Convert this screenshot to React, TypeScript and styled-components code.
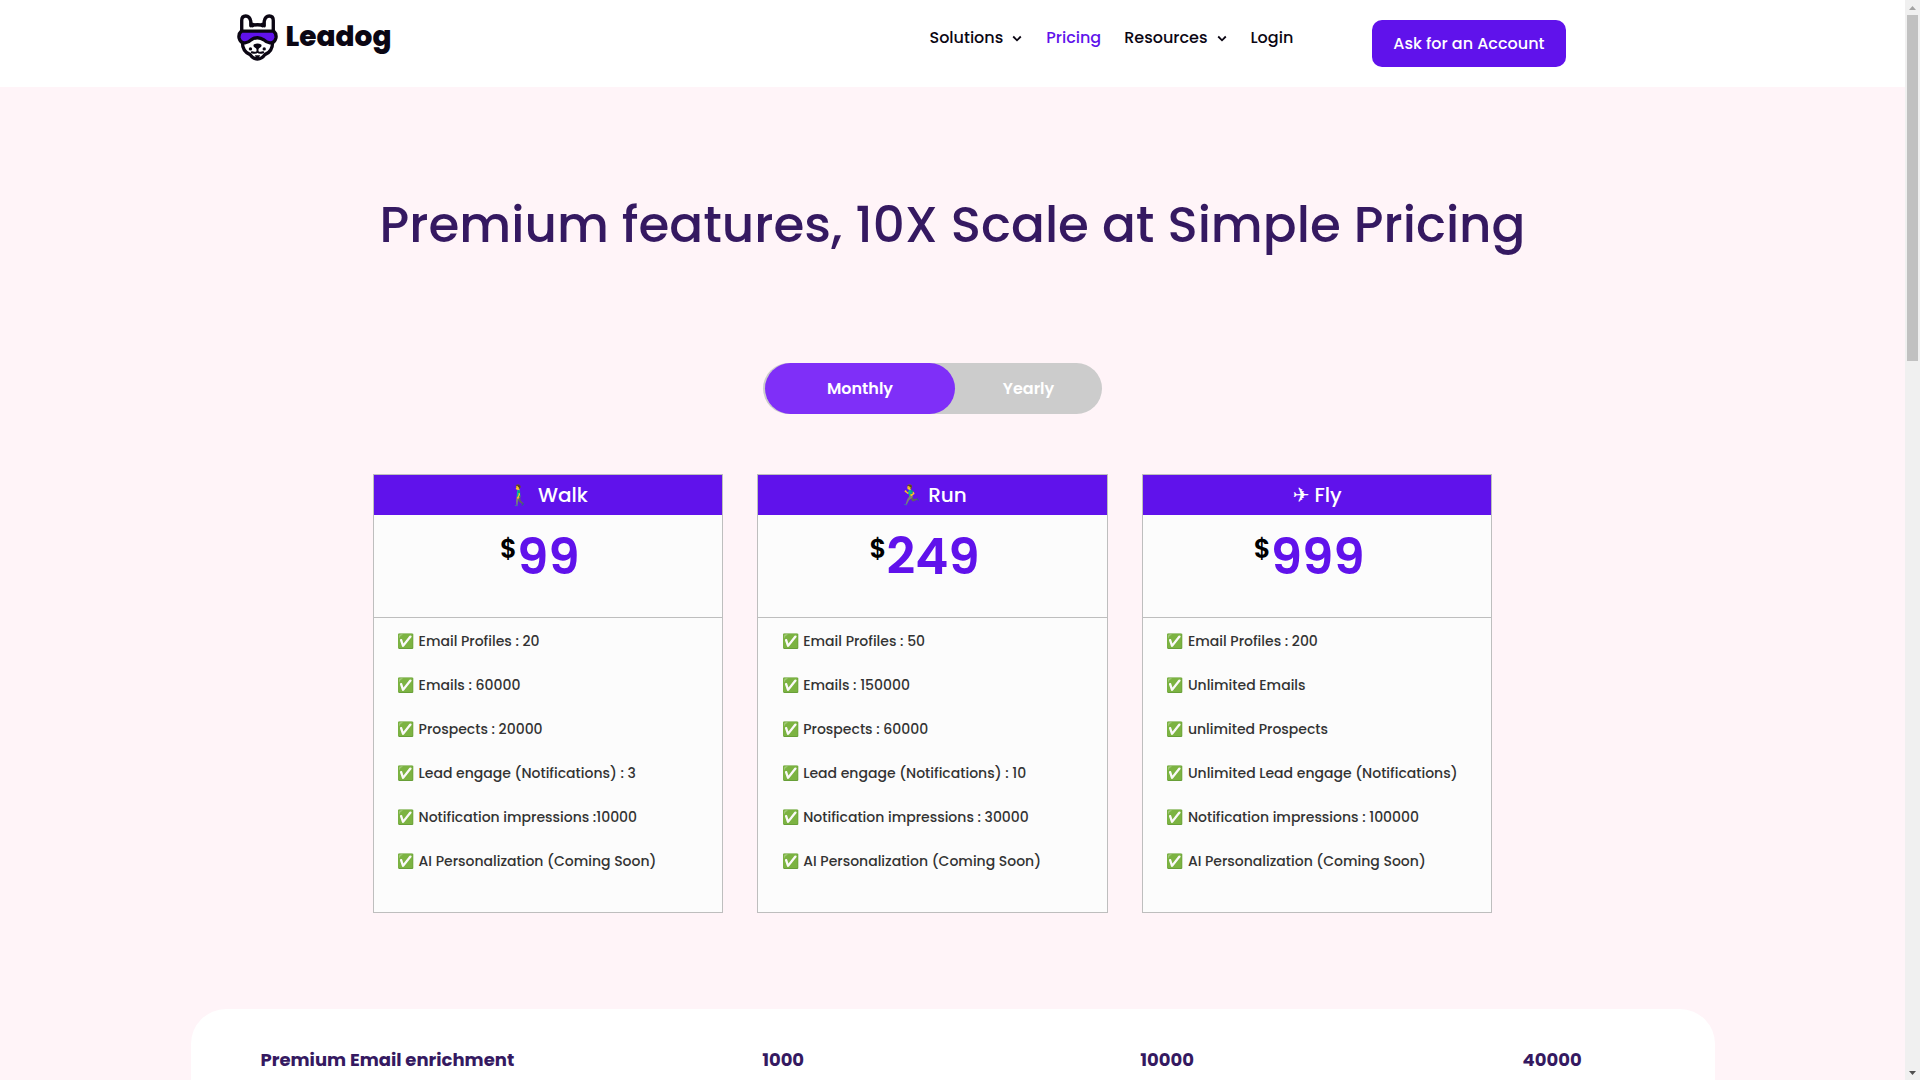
import React, { useState } from "react";
import styled, { createGlobalStyle } from "styled-components";

const color = {
  purple: "#6012eb",
  purpleLight: "#7f2ff8",
  plum: "#351961",
  ink: "#0b0613",
  blush: "#fff4f8",
  line: "#bebebe",
  text: "#333333",
};

const GlobalStyle = createGlobalStyle`
  *, *::before, *::after { box-sizing: border-box; }
  body {
    margin: 0;
    font-family: Poppins, Inter, "DejaVu Sans", "Noto Color Emoji", sans-serif;
    font-weight: 500;
    color: ${color.text};
  }
`;

const Window = styled.div`
  display: flex;
  height: 100vh;
  overflow: hidden;
  background: ${color.blush};
`;

const Page = styled.div`
  flex: 1;
  min-width: 0;
  overflow: hidden;
`;

const Header = styled.header`
  background: #fff;
`;

const HeaderInner = styled.div`
  width: 80%;
  height: 87px;
  margin: 0 auto;
  padding: 0 149px 0 46px;
  display: flex;
  align-items: flex-start;
`;

const Logo = styled.a`
  display: flex;
  gap: 8px;
  padding-top: 14px;
  color: ${color.ink};
  font-size: 28px;
  line-height: 45px;
  font-weight: 800;
  text-decoration: none;
`;

const Nav = styled.nav`
  display: flex;
  gap: 23px;
  margin: 26px 79px 0 auto;
`;

const NavLink = styled.a<{ $active?: boolean }>`
  display: flex;
  align-items: center;
  gap: 8px;
  font-size: 16px;
  line-height: 24px;
  color: ${(p) => (p.$active ? color.purple : color.ink)};
  text-decoration: none;
`;

const AccountButton = styled.button`
  margin-top: 20px;
  height: 47px;
  padding: 0 21px;
  border: 0;
  border-radius: 10px;
  background: ${color.purple};
  color: #fff;
  font: inherit;
  font-size: 16px;
  white-space: nowrap;
`;

const Title = styled.h1`
  margin: 0;
  padding: 108px 0;
  color: ${color.plum};
  font-size: 50px;
  line-height: 60px;
  font-weight: 500;
  text-align: center;
`;

const Pricing = styled.section`
  max-width: 1160px;
  margin: 0 auto;
  padding-right: 40px;
`;

const Toggle = styled.div`
  display: flex;
  width: 339px;
  height: 51px;
  margin: 0 auto 60px;
  padding-left: 2px;
  border-radius: 26px;
  background: #ccc;
`;

const ToggleOption = styled.button<{ $on: boolean }>`
  flex: ${(p) => (p.$on ? "0 0 190px" : "1")};
  border: 0;
  border-radius: 26px;
  background: ${(p) => (p.$on ? color.purpleLight : "transparent")};
  color: #fff;
  font: inherit;
  font-size: 16px;
  font-weight: 600;
`;

const Cards = styled.div`
  display: grid;
  grid-template-columns: repeat(3, minmax(0, 1fr));
  gap: 34px;
`;

const Card = styled.article`
  border: 1px solid ${color.line};
  background: #fcfcfc;
`;

const CardTitle = styled.h2`
  margin: 0;
  height: 40px;
  background: ${color.purple};
  color: #fff;
  font-size: 20px;
  line-height: 40px;
  font-weight: 500;
  text-align: center;
`;

const Price = styled.div`
  display: flex;
  justify-content: center;
  height: 103px;
  padding: 12px 16px 0 0;
  border-bottom: 1px solid ${color.line};
  color: ${color.purple};
  font-size: 50px;
  line-height: 60px;
  font-weight: 600;
`;

const Currency = styled.span`
  color: #000;
  font-size: 26px;
  line-height: 44px;
`;

const Features = styled.ul`
  margin: 0;
  padding: 1px 24px 29px;
  list-style: none;
  font-size: 14px;
  line-height: 44px;
`;

const Feature = styled.li`
  height: 44px;
  white-space: nowrap;
`;

const Panel = styled.section`
  width: 80%;
  margin: 96px auto 0;
  padding: 36px 0 120px 70px;
  border-radius: 35px;
  background: #fff;
`;

const Table = styled.table`
  width: 100%;
  border-collapse: collapse;
  table-layout: fixed;
  color: ${color.plum};
  font-size: 18px;
  line-height: 30px;
  font-weight: 700;
  text-align: left;
`;

const Cell = styled.td<{ $width: string }>`
  width: ${(p) => p.$width};
  padding: 0;
`;

const Scrollbar = styled.div`
  display: flex;
  flex-direction: column;
  align-items: center;
  flex: 0 0 15px;
  background: #f0f0f0;
`;

const ScrollThumb = styled.div`
  width: 11px;
  height: 32%;
  margin-bottom: auto;
  background: #c1c1c1;
`;

const ScrollArrow = ({ down }: { down?: boolean }) => (
  <svg width="15" height="15" viewBox="0 0 15 15" aria-hidden="true">
    <path d={down ? "M4 6h7L7.5 10z" : "M4 10h7L7.5 6z"} fill={down ? "#505050" : "#a3a3a3"} />
  </svg>
);

const Chevron = () => (
  <svg width="12" height="12" viewBox="0 0 12 12" aria-hidden="true">
    <path d="M2.2 4.500 6 8.300l3.800-3.800" fill="none" stroke={color.ink} strokeWidth="1.800" />
  </svg>
);

const DogMark = () => (
  <svg width="41" height="47" viewBox="51 43 122 140" aria-hidden="true">
    <g fill="none" stroke={color.ink} strokeWidth="10" strokeLinecap="round" strokeLinejoin="round">
      <path d="M65 94V62q0-13 12-13 12 0 15 16v13q20-6 40 0V65q3-16 15-16 12 0 12 13v32" fill="#fff" />
      <path d="M97 73v5M127 73v5" />
      <path d="M67 124q-1 31 23 40 9 13 22 13t22-13q24-9 23-40" fill="#fff" />
      <path d="M64 94h96q9 8 7 20-4 16-18 15-10-1-18-9-19-13-38 0-8 8-18 9-14 1-18-15-2-12 7-20z" fill={color.purple} />
      <path d="M112 143v12M95 157q11 4 17-2 6 6 17 2" strokeWidth="6" />
    </g>
    <g fill={color.ink}>
      <path d="M101 134q11-6 22 0 3 5-3 9l-8 6-8-6q-6-4-3-9z" />
      <circle cx="91" cy="147" r="5" />
      <circle cx="132" cy="147" r="5" />
      <path d="M104 166h16l-4 8h-8z" />
    </g>
  </svg>
);

const plans = [
  {
    icon: "🚶‍♂️",
    name: "Walk",
    price: "99",
    features: [
      "Email Profiles : 20",
      "Emails : 60000",
      "Prospects : 20000",
      "Lead engage (Notifications) : 3",
      "Notification impressions :10000",
      "AI Personalization (Coming Soon)",
    ],
  },
  {
    icon: "🏃‍♂️",
    name: "Run",
    price: "249",
    features: [
      "Email Profiles : 50",
      "Emails : 150000",
      "Prospects : 60000",
      "Lead engage (Notifications) : 10",
      "Notification impressions : 30000",
      "AI Personalization (Coming Soon)",
    ],
  },
  {
    icon: "✈",
    name: "Fly",
    price: "999",
    features: [
      "Email Profiles : 200",
      "Unlimited Emails",
      "unlimited Prospects",
      "Unlimited Lead engage (Notifications)",
      "Notification impressions : 100000",
      "AI Personalization (Coming Soon)",
    ],
  },
];

const periods = ["Monthly", "Yearly"];

export default function App() {
  const [period, setPeriod] = useState("Monthly");
  return (
    <Window>
      <GlobalStyle />
      <Page>
        <Header>
          <HeaderInner>
            <Logo href="#">
              <DogMark />
              Leadog
            </Logo>
            <Nav>
              <NavLink href="#solutions">Solutions <Chevron /></NavLink>
              <NavLink href="#pricing" $active>Pricing</NavLink>
              <NavLink href="#resources">Resources <Chevron /></NavLink>
              <NavLink href="#login">Login</NavLink>
            </Nav>
            <AccountButton type="button">Ask for an Account</AccountButton>
          </HeaderInner>
        </Header>
        <main>
          <Title>Premium features, 10X Scale at Simple Pricing</Title>
          <Pricing>
            <Toggle>
              {periods.map((p) => (
                <ToggleOption
                  key={p}
                  type="button"
                  $on={p === period}
                  aria-pressed={p === period}
                  onClick={() => setPeriod(p)}
                >
                  {p}
                </ToggleOption>
              ))}
            </Toggle>
            <Cards>
              {plans.map((plan) => (
                <Card key={plan.name}>
                  <CardTitle>{plan.icon} {plan.name}</CardTitle>
                  <Price>
                    <Currency>$</Currency>
                    {plan.price}
                  </Price>
                  <Features>
                    {plan.features.map((f) => (
                      <Feature key={f}>✅ {f}</Feature>
                    ))}
                  </Features>
                </Card>
              ))}
            </Cards>
          </Pricing>
          <Panel>
            <Table>
              <tbody>
                <tr>
                  <Cell as="th" scope="row" $width="34.5%">Premium Email enrichment</Cell>
                  <Cell $width="26%">1000</Cell>
                  <Cell $width="26.3%">10000</Cell>
                  <Cell $width="13.2%">40000</Cell>
                </tr>
              </tbody>
            </Table>
          </Panel>
        </main>
      </Page>
      <Scrollbar aria-hidden="true">
        <ScrollArrow />
        <ScrollThumb />
        <ScrollArrow down />
      </Scrollbar>
    </Window>
  );
}
